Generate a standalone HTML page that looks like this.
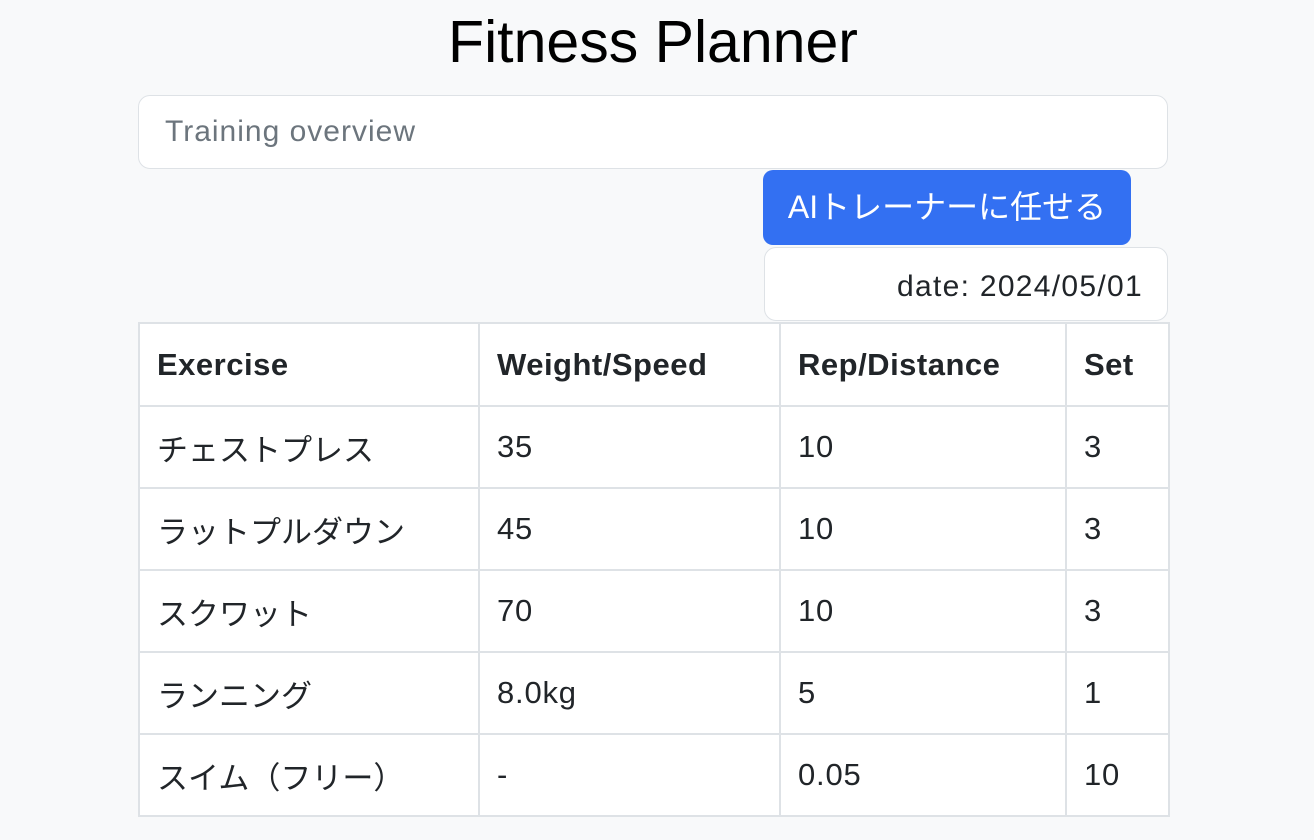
<!DOCTYPE html>
<html><head><meta charset="utf-8"><style>
body{margin:0;width:1314px;height:840px;background:#f8f9fa;font-family:"Liberation Sans","Noto Sans CJK JP",sans-serif;color:#212529;position:relative;overflow:hidden}
h1{position:absolute;top:6px;left:0;width:1306px;margin:0;text-align:center;font-size:59px;font-weight:400;line-height:72px;color:#000}
.inp{position:absolute;left:138px;top:95px;width:1028px;height:72px;border:1px solid #dee2e6;border-radius:12px;background:#fff;box-sizing:content-box}
.inp span{position:absolute;left:26px;top:19px;font-size:30px;letter-spacing:1px;color:#6c757d}
.btn{position:absolute;left:763px;top:170px;width:368px;height:75px;background:#3370f2;border-radius:10px;color:#fff;font-size:32px;line-height:75px;text-align:center}
.date{position:absolute;left:764px;top:247px;width:402px;height:72px;border:1px solid #dee2e6;border-radius:12px;background:#fff;font-size:30px;letter-spacing:1.3px;line-height:78px;text-align:right;box-sizing:content-box}
.date span{margin-right:24px}
table{position:absolute;left:138px;top:322px;border-collapse:collapse;background:#fff;font-size:31px}
td,th{border:2px solid #dee2e6;height:80px;padding:0 0 0 17px;text-align:left;vertical-align:middle;letter-spacing:0.8px}
td:first-child{letter-spacing:0}
th{font-weight:700;height:81px;letter-spacing:0.5px}
</style></head><body>
<h1>Fitness Planner</h1>
<div class="inp"><span>Training overview</span></div>
<div class="btn">AIトレーナーに任せる</div>
<div class="date"><span>date: 2024/05/01</span></div>
<table>
<colgroup><col style="width:340px"><col style="width:301px"><col style="width:286px"><col style="width:103px"></colgroup>
<tr><th>Exercise</th><th>Weight/Speed</th><th>Rep/Distance</th><th>Set</th></tr>
<tr><td>チェストプレス</td><td>35</td><td>10</td><td>3</td></tr>
<tr><td>ラットプルダウン</td><td>45</td><td>10</td><td>3</td></tr>
<tr><td>スクワット</td><td>70</td><td>10</td><td>3</td></tr>
<tr><td>ランニング</td><td>8.0kg</td><td>5</td><td>1</td></tr>
<tr><td>スイム（フリー）</td><td>-</td><td>0.05</td><td>10</td></tr>
</table>
</body></html>
